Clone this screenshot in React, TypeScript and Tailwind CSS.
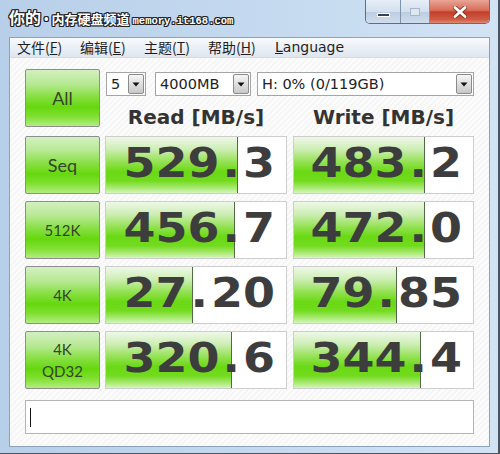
import React from 'react';

const greenFill =
  'bg-[linear-gradient(to_bottom,#eef8e8_0%,#cdeeb4_22%,#92e150_45%,#6ad914_62%,#72db1e_78%,#aeeb7a_92%,#d6f5c0_100%)]';
const btnFill =
  'bg-[linear-gradient(to_bottom,#d2f0c0_0%,#b6e993_25%,#86df40_48%,#66d80e_66%,#7ddf2e_82%,#b3ec80_100%)]';

const rows = [
  { label: ['Seq'], read: ['529', '3'], readPct: 73.5, write: ['483', '2'], writePct: 73 },
  { label: ['512K'], read: ['456', '7'], readPct: 71.8, write: ['472', '0'], writePct: 73 },
  { label: ['4K'], read: ['27', '20'], readPct: 48.6, write: ['79', '85'], writePct: 57.5 },
  { label: ['4K', 'QD32'], read: ['320', '6'], readPct: 70.2, write: ['344', '4'], writePct: 70.7 },
];

function SideButton({ label, comic }: { label: string[]; comic?: boolean }) {
  return (
    <div
      className={`flex h-[58px] w-[75px] shrink-0 flex-col items-center justify-center rounded-[2px] border border-[#8e8e8e] ${btnFill} text-[#34452a] ${
        comic ? "font-['Lato',sans-serif] text-[18px]" : "font-['Lato',sans-serif] text-[15px] leading-[22px]"
      }`}
    >
      {label.map((l) => (
        <span key={l}>{l}</span>
      ))}
    </div>
  );
}

function ValueBox({ parts, pct, width }: { parts: string[]; pct: number; width: string }) {
  return (
    <div className={`relative h-[58px] ${width} shrink-0 border border-[#cdcdcd] bg-white`}>
      <div className={`absolute inset-y-0 left-0 border-r border-[#4f6a45] ${greenFill}`} style={{ width: `${pct}%` }} />
      <div className="relative flex h-full scale-y-[0.9] items-center justify-end pr-[11px] pb-[7px] font-['DejaVu_Sans',sans-serif] text-[46px] font-bold leading-none text-[#3d3d3d]">
        {parts[0]}
        <span className="mx-[3px]">.</span>
        {parts[1]}
      </div>
    </div>
  );
}

function Combo({ text, width }: { text: string; width: string }) {
  return (
    <div className={`flex h-[24px] ${width} items-center border border-[#a5a5a5] bg-white`}>
      <span className="flex-1 pl-[4px] font-['DejaVu_Sans',sans-serif] text-[14.5px] leading-none text-[#222]">{text}</span>
      <div className="mr-[1px] flex h-[20px] w-[16px] items-center justify-center rounded-[2px] border border-[#8a8a8a] bg-[linear-gradient(to_bottom,#f6f6f6,#dcdcdc_55%,#c8c8c8)]">
        <svg width="8" height="5" viewBox="0 0 8 5">
          <path d="M0.5 0.5h7L4 4.5z" fill="#111" />
        </svg>
      </div>
    </div>
  );
}

export default function App() {
  return (
    <div className="flex h-[454px] w-[500px] flex-col overflow-hidden border-r-2 border-b border-[#4b5562] bg-[linear-gradient(to_right,#b8cfe9,#c6dbf0_60%,#d2e3f4)]">
      {/* title bar */}
      <div className="flex h-[37px] shrink-0 items-start justify-between">
        <div className="mt-[5px] ml-[9px] flex items-baseline gap-[3px] text-white [text-shadow:1px_0_0_#222,-1px_0_0_#222,0_1px_0_#222,0_-1px_0_#222,1px_1px_0_#222,-1px_-1px_0_#222,1px_-1px_0_#222,-1px_1px_0_#222]">
          <span className="font-['Noto_Sans_CJK_SC',sans-serif] text-[16px] font-bold">你的</span>
          <span className="text-[12px] font-bold">•</span>
          <span className="font-['Noto_Sans_CJK_SC',sans-serif] text-[13px] font-bold">内存硬盘频道</span>
          <span className="font-['Liberation_Mono',monospace] text-[10.5px] font-bold">memory.it168.com</span>
        </div>
        <div className="mr-[8px] flex h-[24px] overflow-hidden rounded-b-[5px] border border-t-0 border-[#5a6f8a]">
          <div className="flex w-[35px] items-end justify-center border-r border-[#7f93ab] bg-[linear-gradient(to_bottom,#e7eef7,#d3e0ee_50%,#bccde2_52%,#cfdced)] pb-[6px]">
            <div className="h-[4px] w-[13px] border border-white bg-[#38414d]" />
          </div>
          <div className="flex w-[29px] items-center justify-center border-r border-[#7f93ab] bg-[linear-gradient(to_bottom,#e7eef7,#d3e0ee_50%,#bccde2_52%,#cfdced)]">
            <div className="h-[8px] w-[10px] border border-[#a7b6c8] bg-[#dfe7f1]" />
          </div>
          <div className="flex w-[59px] items-center justify-center bg-[linear-gradient(to_bottom,#e9a595,#d76d58_45%,#c43e2a_52%,#cf5d45_85%,#e08a70)]">
            <svg width="14" height="12" viewBox="0 0 14 12">
              <path d="M2 1.5l10 9M12 1.5l-10 9" stroke="#5a1a10" strokeWidth="4.5" strokeLinecap="round" opacity="0.6" />
              <path d="M2 1.5l10 9M12 1.5l-10 9" stroke="#fff" strokeWidth="2.8" strokeLinecap="round" />
            </svg>
          </div>
        </div>
      </div>

      {/* client area */}
      <div className="mx-[8px] ml-[9px] mb-[6px] flex flex-1 flex-col border border-[#8ea3bb] bg-[repeating-linear-gradient(135deg,#f6f6f6_0px,#f6f6f6_2px,#fcfcfc_2px,#fcfcfc_4px)]">
        {/* menu bar */}
        <div className="flex h-[20px] shrink-0 items-center border-b border-[#d5dce6] bg-[linear-gradient(to_bottom,#f8fafd,#e9eef5_60%,#dfe6ef)] pl-[7px] font-['Noto_Sans_CJK_SC',sans-serif] text-[14px] text-[#1e1e1e]">
          <span className="w-[63px]">文件(<span className="underline">F</span>)</span>
          <span className="w-[64px]">编辑(<span className="underline">E</span>)</span>
          <span className="w-[64px]">主题(<span className="underline">T</span>)</span>
          <span className="w-[67px]">帮助(<span className="underline">H</span>)</span>
          <span className="font-['DejaVu_Sans',sans-serif] text-[14px]">
            <span className="underline">L</span>anguage
          </span>
        </div>

        {/* body */}
        <div className="flex flex-col pt-[11px] pl-[15px]">
          <div className="flex">
            <SideButton label={['All']} comic />
            <div className="ml-[5px] flex flex-col">
              <div className="mt-[3px] flex">
                <div className="ml-[1px]" />
                <Combo text="5" width="w-[40px]" />
                <div className="ml-[9px]" />
                <Combo text="4000MB" width="w-[96px]" />
                <div className="ml-[6px]" />
                <Combo text="H: 0% (0/119GB)" width="w-[217px]" />
              </div>
              <div className="mt-[9px] flex gap-[6px] font-['DejaVu_Sans',sans-serif] text-[20px] leading-[24px] font-bold text-[#333]">
                <div className="w-[182px] text-center">Read [MB/s]</div>
                <div className="w-[181px] text-center">Write [MB/s]</div>
              </div>
            </div>
          </div>

          {rows.map((r) => (
            <div key={r.label.join('')} className="mt-[7px] flex">
              <SideButton label={r.label} comic={r.label[0] === 'Seq'} />
              <div className="ml-[5px]" />
              <ValueBox parts={r.read} pct={r.readPct} width="w-[182px]" />
              <div className="ml-[6px]" />
              <ValueBox parts={r.write} pct={r.writePct} width="w-[181px]" />
            </div>
          ))}

          <div className="mt-[11px] flex h-[34px] w-[449px] items-center border border-[#b4b4b4] bg-white pl-[4px]">
            <div className="h-[19px] w-[1px] bg-[#111]" />
          </div>
        </div>
      </div>
    </div>
  );
}
